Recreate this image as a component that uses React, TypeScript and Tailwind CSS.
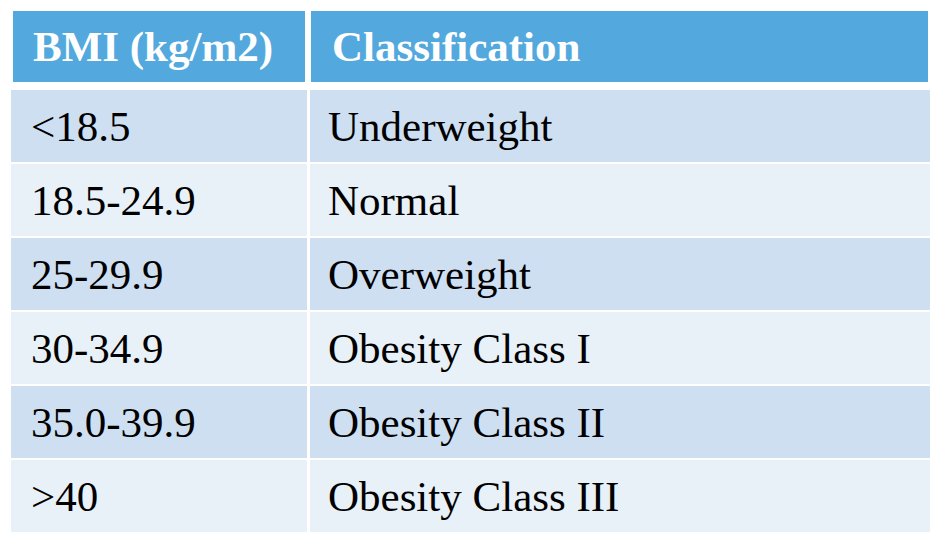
const rows = [
  ["<18.5", "Underweight"],
  ["18.5-24.9", "Normal"],
  ["25-29.9", "Overweight"],
  ["30-34.9", "Obesity Class I"],
  ["35.0-39.9", "Obesity Class II"],
  [">40", "Obesity Class III"],
]

export default function App() {
  return (
    <div className="w-[940px] h-[540px] bg-white overflow-hidden pt-[11px] font-['Liberation_Serif',serif] text-[43px] leading-none">
      {/* header row */}
      <div className="ml-[13px] flex w-[915px] gap-[6px] h-[71px] text-white font-bold">
        <div className="w-[292px] bg-[#53a9de] flex items-center pl-5">BMI (kg/m2)</div>
        <div className="flex-1 bg-[#53a9de] flex items-center pl-[21px]">Classification</div>
      </div>

      {/* body rows */}
      <div className="ml-[11px] mt-2 w-[919px] flex flex-col gap-[2px] text-black">
        {rows.map(([bmi, label], idx) => (
          <div key={idx} className="flex gap-[3px] h-[72px]">
            <div className={`w-[296px] flex items-center pl-5 ${idx % 2 === 0 ? "bg-[#cddff1]" : "bg-[#e8f0f8]"}`}>
              {bmi}
            </div>
            <div className={`flex-1 flex items-center pl-[18px] ${idx % 2 === 0 ? "bg-[#cddff1]" : "bg-[#e8f0f8]"}`}>
              {label}
            </div>
          </div>
        ))}
      </div>
    </div>
  )
}
